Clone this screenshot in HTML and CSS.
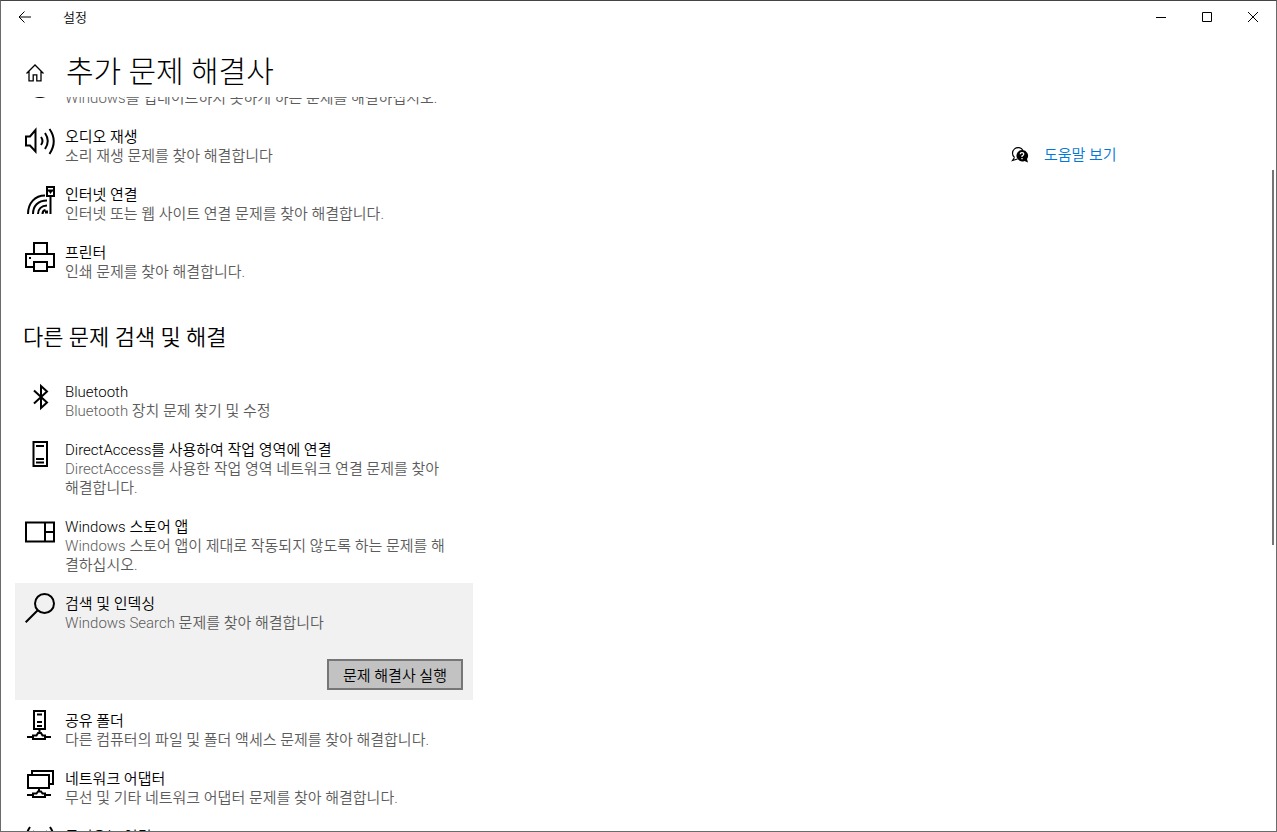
FILE: index.html
```html
<!DOCTYPE html>
<html lang="ko">
<head>
    <meta charset="UTF-8">
    <meta name="viewport" content="width=device-width, initial-scale=1.0">
    <title>설정</title>
    <link rel="stylesheet" href="styles.css">
</head>
<body>

    <div class="window">
        <div class="titlebar">
            <button class="back" aria-label="뒤로">
                <svg width="14" height="12" viewBox="0 0 14 12"><path d="M6.5 0.5L1 6l5.5 5.5M1 6h12"/></svg>
            </button>
            <span class="app-name">설정</span>
            <button class="win-btn" aria-label="최소화">
                <svg width="12" height="12" viewBox="0 0 12 12"><path d="M1 6.5h10"/></svg>
            </button>
            <button class="win-btn" aria-label="최대화">
                <svg width="12" height="12" viewBox="0 0 12 12"><path d="M1.5 1.5h9v9h-9z"/></svg>
            </button>
            <button class="win-btn" aria-label="닫기">
                <svg width="12" height="12" viewBox="0 0 12 12"><path d="M1 1l10 10M11 1L1 11"/></svg>
            </button>
        </div>

        <header class="header">
            <a href="#" class="home" aria-label="홈">
                <svg width="20" height="20" viewBox="0 0 20 20"><path d="M1.5 11.5L10 3l8.500 8.500M4 9.500v9.300h4.200v-6h3.600v6H16V9.500"/></svg>
            </a>
            <h1>추가 문제 해결사</h1>
        </header>

        <div class="content">
            <main class="list">
                <section class="item partial">
                    <svg class="icon" viewBox="0 0 30 30"><circle cx="15" cy="15" r="14"/><path d="M15 7v9l5 4"/></svg>
                    <div class="text">
                        <p>Windows를 업데이트하지 못하게 하는 문제를 해결하십시오.</p>
                    </div>
                </section>
                <section class="item">
                    <svg class="icon" viewBox="0 0 30 30"><path d="M1 10.500h4L10.500 4v21.500L5 19.500H1zM16 11q3 4 0 8M20 7q5.500 8 0 16M24.500 3q8.500 12 0 25"/></svg>
                    <div class="text">
                        <h3>오디오 재생</h3>
                        <p>소리 재생 문제를 찾아 해결합니다</p>
                    </div>
                </section>
                <section class="item">
                    <svg class="icon" viewBox="0 0 30 30"><path d="M22 3h7v9h-7zM22 6.500h7M25.500 12v18M3 30C3 19 10 11.500 20 11.500M8 30c0-8 5-13.500 14-13.500M13 30c0-5 3.500-8.500 9-8.500"/><path d="M17.500 30q0-3.500 3-4"/><path class="fill" d="M23.500 7h4l-2 3zM20 26.500h3v3h-3z"/></svg>
                    <div class="text">
                        <h3>인터넷 연결</h3>
                        <p>인터넷 또는 웹 사이트 연결 문제를 찾아 해결합니다.</p>
                    </div>
                </section>
                <section class="item">
                    <svg class="icon" viewBox="0 0 30 30"><path d="M9 12V1h13v11M9 25H1V12h28v13h-7M9 20h13v9H9z"/><path class="fill" d="M4 15h2v2H4z"/></svg>
                    <div class="text">
                        <h3>프린터</h3>
                        <p>인쇄 문제를 찾아 해결합니다.</p>
                    </div>
                </section>

                <h2>다른 문제 검색 및 해결</h2>

                <section class="item">
                    <svg class="icon" viewBox="0 0 30 30"><path d="M9 9.500l13 12-6 5.500V5l6 5.500-13 12"/></svg>
                    <div class="text">
                        <h3>Bluetooth</h3>
                        <p>Bluetooth 장치 문제 찾기 및 수정</p>
                    </div>
                </section>
                <section class="item">
                    <svg class="icon" viewBox="0 0 30 30"><path d="M8.500 3H22v24H8.500zM11 7h8M11 20h8M11 23.500h8"/></svg>
                    <div class="text">
                        <h3>DirectAccess를 사용하여 작업 영역에 연결</h3>
                        <p>DirectAccess를 사용한 작업 영역 네트워크 연결 문제를 찾아<br>해결합니다.</p>
                    </div>
                </section>
                <section class="item">
                    <svg class="icon" viewBox="0 0 30 30"><path d="M1 6.500h28v19H1zM20 6.500v19M20 16h9"/></svg>
                    <div class="text">
                        <h3>Windows 스토어 앱</h3>
                        <p>Windows 스토어 앱이 제대로 작동되지 않도록 하는 문제를 해<br>결하십시오.</p>
                    </div>
                </section>
                <section class="item selected">
                    <svg class="icon" viewBox="0 0 30 30"><circle cx="19.500" cy="10.500" r="9.500"/><path d="M13 17L0.700 29.300"/></svg>
                    <div class="text">
                        <h3>검색 및 인덱싱</h3>
                        <p>Windows Search 문제를 찾아 해결합니다</p>
                    </div>
                    <button class="run">문제 해결사 실행</button>
                </section>
                <section class="item">
                    <svg class="icon" viewBox="0 0 30 30"><path d="M9 1h11v18H9zM12 4.500h5M12 12h5M12 16h5M14.500 19v4M2 27h6M20 27h6M8 25.500h3.500L13 23h3l1.500 2.500H20V29H8z"/></svg>
                    <div class="text">
                        <h3>공유 폴더</h3>
                        <p>다른 컴퓨터의 파일 및 폴더 액세스 문제를 찾아 해결합니다.</p>
                    </div>
                </section>
                <section class="item">
                    <svg class="icon" viewBox="0 0 30 30"><path d="M7 7V3h21v13h-4M3 7h21v13H3zM14 20v4M2 27h6M20 27h6M8 25.500h3.500L13 23.500h3l1.500 2H20V29H8z"/></svg>
                    <div class="text">
                        <h3>네트워크 어댑터</h3>
                        <p>무선 및 기타 네트워크 어댑터 문제를 찾아 해결합니다.</p>
                    </div>
                </section>
                <section class="item">
                    <svg class="icon" viewBox="0 0 30 30"><path d="M5 1q-8 12 0 24M25 1q8 12 0 24M9 5q-5 8 0 16M21 5q5 8 0 16"/><circle cx="15" cy="13" r="2"/></svg>
                    <div class="text">
                        <h3>들어오는 연결</h3>
                    </div>
                </section>
            </main>

            <aside class="help">
                <svg width="18" height="18" viewBox="0 0 18 18">
                    <path class="bubble" d="M3.500 11.500A5.600 5.600 0 1 1 12 4.500M3.500 11.500L1.500 14.500l5-1.500"/>
                    <path class="fill" d="M11 4a5.700 5.700 0 1 0 2.500 10.900l3.500 1.600-1-3.500A5.700 5.700 0 0 0 11 4z"/>
                    <path class="mark" d="M9.200 8.200q0-1.600 1.800-1.600t1.800 1.500q0 1-1.800 2v1M11 12v1.300"/>
                </svg>
                <a href="#">도움말 보기</a>
            </aside>

            <div class="scroll-thumb"></div>
        </div>
    </div>

</body>
</html>
```
FILE: styles.css
```css
* { box-sizing: border-box; }
body { margin: 0; font-family: Roboto, "Noto Sans CJK KR", sans-serif; font-size: 15px; font-weight: 350; line-height: 19px; color: #000; background: #fff; }
h1, h2, h3, p { margin: 0; font-weight: 350; }
button { font-family: inherit; font-weight: inherit; border: 0; background: none; padding: 0; }
svg { display: block; flex: none; fill: none; stroke: #000; }
.fill { fill: #000; stroke: none; }

.window { height: 100vh; display: flex; flex-direction: column; overflow: hidden; border: 1px solid #6b6b6b; border-top-color: #444; }

.titlebar { flex: none; height: 32px; display: flex; align-items: center; }
.back { width: 48px; height: 32px; display: flex; align-items: center; justify-content: center; }
.app-name { flex: 1; padding-left: 14px; font-size: 13px; }
.win-btn { width: 46px; height: 32px; display: flex; align-items: center; justify-content: center; }

.header { flex: none; height: 64px; padding: 14px 24px 0; display: flex; align-items: center; gap: 21px; }
.home svg { stroke-width: 1.3; }
h1 { font-size: 30px; line-height: 40px; font-weight: 300; }

.content { position: relative; flex: 1; min-height: 0; overflow: hidden; display: grid; grid-template-columns: 1fr 265px; }
.list { margin-top: -39px; padding-left: 14px; }
.item { width: 458px; padding: 12px 10px 8px; display: flex; flex-wrap: wrap; column-gap: 10px; }
.icon { width: 30px; height: 30px; margin-top: -2px; stroke-width: 2; }
.text { flex: 1; white-space: nowrap; }
.text h3 { font-size: 15px; }
.text p { color: #5c5c5c; }
.partial .text { padding-top: 19px; }
h2 { padding: 34px 8px 19px; font-size: 22px; line-height: 28px; }

.selected { background: #f1f1f1; }
.run { margin: 26px 0 2px auto; width: 136px; height: 31px; border: 2px solid #767676; background: #c2c2c2; font-size: 15px; color: #000; }

.help { padding-top: 49px; display: flex; align-items: flex-start; gap: 15px; }
.help a { color: #0078d7; text-decoration: none; }
.bubble { stroke-width: 1.2; }
.mark { stroke: #fff; stroke-width: 1.3; }

.scroll-thumb { position: absolute; top: 10%; right: 2px; width: 2px; height: 51%; background: #767676; }
```
